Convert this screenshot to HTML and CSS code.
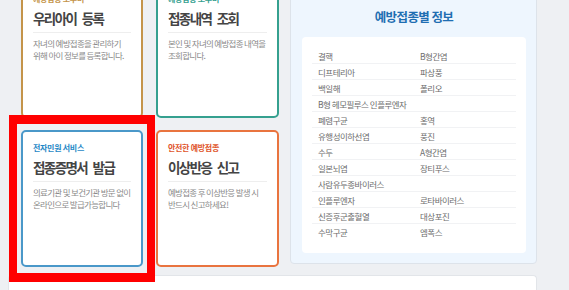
FILE: index.html
```html
<!DOCTYPE html>
<html>
<head>
    <title>예방접종 도우미</title>
    <link rel="stylesheet" href="styles.css">
</head>
<body>
    <div class="content">
        <div class="cards">
            <div class="card card-gold">
                <p class="sub">예방접종 도우미</p>
                <h3>우리아이 등록</h3>
                <p class="desc">자녀의 예방접종을 관리하기<br>위해 아이 정보를 등록합니다.</p>
            </div>
            <div class="card card-teal">
                <p class="sub">예방접종 도우미</p>
                <h3>접종내역 조회</h3>
                <p class="desc">본인 및 자녀의 예방접종 내역을<br>조회합니다.</p>
            </div>
            <div class="card card-blue">
                <p class="sub">전자민원 서비스</p>
                <h3>접종증명서 발급</h3>
                <p class="desc">의료기관 및 보건기관 방문 없이<br>온라인으로 발급가능합니다</p>
                <div class="highlight"></div>
            </div>
            <div class="card card-orange">
                <p class="sub">안전한 예방접종</p>
                <h3>이상반응 신고</h3>
                <p class="desc">예방접종 후 이상반응 발생 시<br>반드시 신고하세요!</p>
            </div>
        </div>
        <div class="info">
            <h2>예방접종별 정보</h2>
            <div class="info-box">
                <div class="row"><span>결핵</span><span>B형간염</span></div>
                <div class="row"><span>디프테리아</span><span>파상풍</span></div>
                <div class="row"><span>백일해</span><span>폴리오</span></div>
                <div class="row"><span>B형 헤모필루스 인플루엔자</span><span></span></div>
                <div class="row"><span>폐렴구균</span><span>홍역</span></div>
                <div class="row"><span>유행성이하선염</span><span>풍진</span></div>
                <div class="row"><span>수두</span><span>A형간염</span></div>
                <div class="row"><span>일본뇌염</span><span>장티푸스</span></div>
                <div class="row"><span>사람유두종바이러스</span><span></span></div>
                <div class="row"><span>인플루엔자</span><span>로타바이러스</span></div>
                <div class="row"><span>신증후군출혈열</span><span>대상포진</span></div>
                <div class="row"><span>수막구균</span><span>엠폭스</span></div>
            </div>
        </div>
    </div>
    <div class="next-box"></div>
</body>
</html>
```

FILE: styles.css
```css
body {
    margin: 0;
    height: 290px;
    overflow: hidden;
    background-color: #eef0f3;
    font-family: "Noto Sans CJK KR", "Noto Sans", sans-serif;
}
.content {
    display: flex;
    align-items: flex-start;
    gap: 11px;
    margin: -19px 0 0 21px;
}
.cards {
    display: grid;
    grid-template-columns: 122px 123px;
    grid-auto-rows: 137px;
    gap: 12px 13px;
}
.card {
    position: relative;
    box-sizing: border-box;
    background-color: #fff;
    border: 2px solid #ccc;
    border-radius: 5px;
    padding: 11px 10px 0;
}
.card-gold {
    border-color: #c4944a;
    border-radius: 0 0 5px 5px;
}
.card-teal {
    border-color: #35a08f;
    border-radius: 0 0 5px 5px;
}
.card-blue {
    border-color: #4a98c9;
}
.card-orange {
    border-color: #e9743f;
}
.sub {
    margin: 0;
    font-size: 8px;
    line-height: 10px;
    font-weight: bold;
    letter-spacing: -0.3px;
}
.card-gold .sub { color: #c4944a; }
.card-teal .sub { color: #35a08f; }
.card-blue .sub { color: #1f88c6; }
.card-orange .sub { color: #e0542a; }
.card h3 {
    margin: 4px 0 0;
    padding-bottom: 4px;
    border-bottom: 1px solid #eeeeee;
    font-size: 13.5px;
    line-height: 20px;
    color: #444;
    letter-spacing: -1.6px;
    word-spacing: 4px;
    white-space: nowrap;
}
.desc {
    margin: 4px 0 0;
    font-size: 8.5px;
    line-height: 12px;
    color: #8a8a8a;
    letter-spacing: -0.7px;
    white-space: nowrap;
}
.highlight {
    position: absolute;
    top: -17px;
    left: -14px;
    right: -14px;
    bottom: -17px;
    border: 8px solid #ff0000;
    border-width: 9px 8px;
}
.info {
    box-sizing: border-box;
    width: 247px;
    height: 283px;
    background-color: #eef6fe;
    border: 1px solid #dde3ea;
    border-radius: 0 0 4px 4px;
    padding: 26px 10px 0 11px;
}
.info h2 {
    margin: 0;
    text-align: center;
    font-size: 12.5px;
    line-height: 18px;
    color: #1f6eb2;
    letter-spacing: -0.6px;
}
.info-box {
    margin-top: 11px;
    height: 216px;
    box-sizing: border-box;
    background-color: #fff;
    border-radius: 4px;
    padding: 11px 10px 0;
}
.row {
    display: grid;
    grid-template-columns: 1fr 1fr;
    height: 16px;
    box-sizing: border-box;
    border-bottom: 1px solid #f1f2f4;
    font-size: 8.5px;
    line-height: 16px;
    color: #6d6d6d;
    letter-spacing: -0.5px;
}
.row:last-child {
    border-bottom: none;
}
.row span {
    padding-left: 6px;
    white-space: nowrap;
}
.next-box {
    margin: 8px 0 0 8px;
    width: 529px;
    height: 15px;
    box-sizing: border-box;
    background-color: #fff;
    border: 1px solid #e2e5e9;
    border-bottom: none;
    border-radius: 4px 4px 0 0;
}
```
